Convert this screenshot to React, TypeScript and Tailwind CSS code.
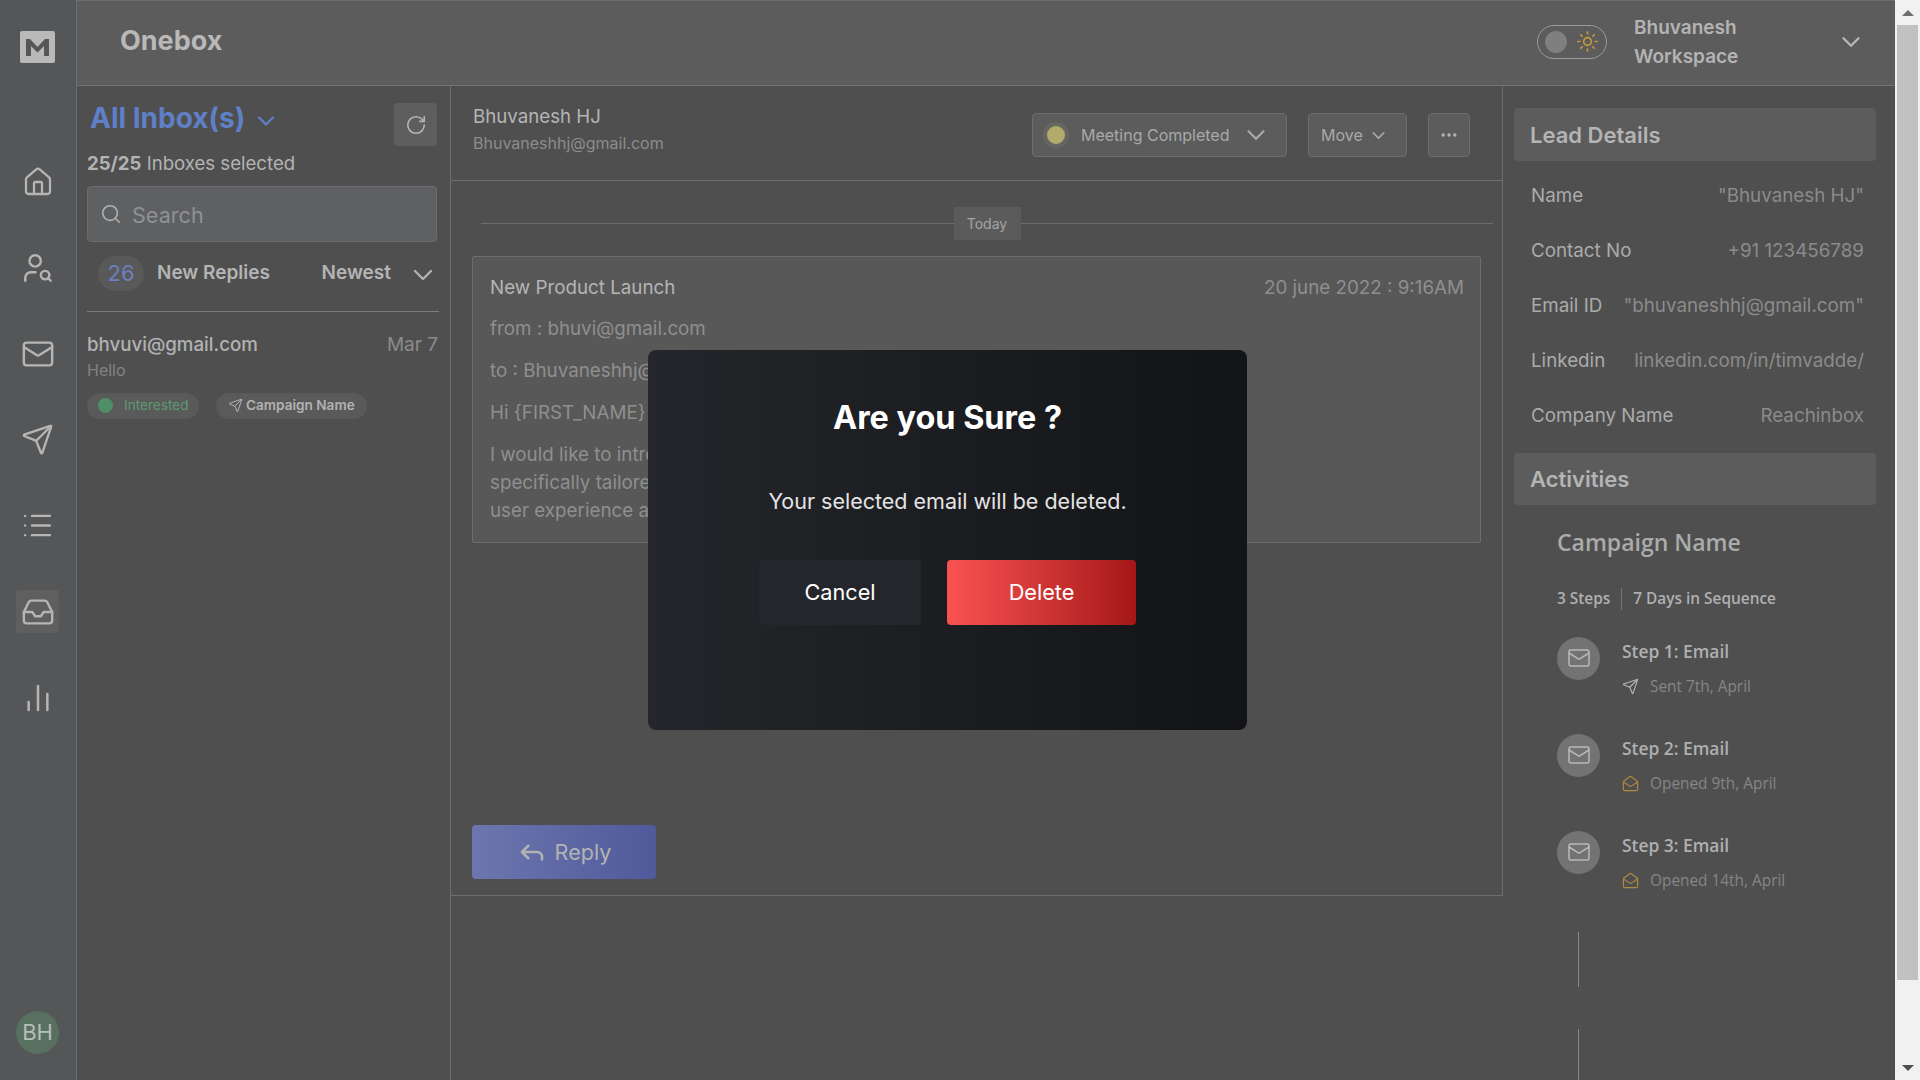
import { ChevronDown, House, Inbox, List, Mail, MailOpen, ChartNoAxesColumn, MoreHorizontal, Reply, RotateCw, Search, Send, Sun, UserSearch } from 'lucide-react';

const leadRows = [
  ['Name', '"Bhuvanesh HJ"'],
  ['Contact No', '+91 123456789'],
  ['Email ID', '"bhuvaneshhj@gmail.com"'],
  ['Linkedin', 'linkedin.com/in/timvadde/'],
  ['Company Name', 'Reachinbox'],
];

const steps = [
  { title: 'Step 1: Email', note: 'Sent 7th, April', sent: true },
  { title: 'Step 2: Email', note: 'Opened 9th, April', sent: false },
  { title: 'Step 3: Email', note: 'Opened 14th, April', sent: false },
];

function Logo() {
  return (
    <svg width="35" height="32" viewBox="0 0 35 32" className="mt-[31px] shrink-0">
      <rect width="35" height="32" rx="2" fill="#b9b9b9" />
      <path d="M6 25V8h4l7.5 8L25 8h4v17h-5V15l-6.5 6.5L11 15v10z" fill="#555657" />
    </svg>
  );
}

function Sidebar() {
  const cls = 'h-[43px] w-[43px] flex items-center justify-center rounded text-[#b5b5b5]';
  return (
    <aside className="w-[77px] shrink-0 flex flex-col items-center pr-px bg-[#555657] border-r border-[#6b6d73]">
      <Logo />
      <div className="mt-[97px] flex flex-col items-center gap-[43px]">
        <div className={cls}><House size={32} strokeWidth={1.7} /></div>
        <div className={cls}><UserSearch size={34} strokeWidth={1.7} /></div>
        <div className={cls}><Mail size={34} strokeWidth={1.7} /></div>
        <div className={cls}><Send size={33} strokeWidth={1.7} /></div>
        <div className={cls}><List size={33} strokeWidth={1.7} /></div>
        <div className={`${cls} bg-[#5f5f5f]`}><Inbox size={34} strokeWidth={1.7} /></div>
        <div className={cls}><ChartNoAxesColumn size={32} strokeWidth={1.9} /></div>
      </div>
      <div className="mt-auto mb-[26px] h-[43px] w-[43px] rounded-full bg-[#58705f] flex items-center justify-center text-[22px] text-[#b7bdb9]">
        BH
      </div>
    </aside>
  );
}

function TopBar() {
  return (
    <header className="h-[86px] shrink-0 flex items-center bg-[#5c5c5c] border-y border-t-[#6a6c75] border-b-[#71737a] pl-[43px] pb-[3px]">
      <h1 className="text-[27px] font-bold text-[#b9b9b9]">Onebox</h1>
      <div className="ml-auto flex items-center">
        <div className="h-[34px] w-[70px] rounded-full border border-[#9a9a9a] flex items-center pl-[7px] gap-[9px]">
          <span className="h-[22px] w-[22px] rounded-full bg-[#7f7f7f]" />
          <Sun size={23} className="text-[#c79a3d]" strokeWidth={1.7} />
        </div>
        <div className="ml-[27px] w-[177px] text-[19px] leading-[29px] font-semibold text-[#b4b4b4]">
          Bhuvanesh Workspace
        </div>
        <ChevronDown size={30} className="ml-[25px] mr-[29px] text-[#b9b9b9]" strokeWidth={1.8} />
      </div>
    </header>
  );
}

function InboxColumn() {
  return (
    <section className="w-[374px] shrink-0 border-r border-[#6b6d73] pl-[10px] pr-[13px]">
      <div className="flex items-start justify-between pt-[17px]">
        <div className="flex items-center -mt-[7px] pl-[1px] text-[#5f7fc6]">
          <span className="text-[28px] leading-[44px] font-bold ml-[2px]">All Inbox(s)</span>
          <ChevronDown size={28} className="ml-[7px] mt-[5px]" strokeWidth={2} />
        </div>
        <button className="h-[43px] w-[43px] rounded bg-[#5e5e5e] flex items-center justify-center text-[#b4b4b4]">
          <RotateCw size={22} strokeWidth={1.8} />
        </button>
      </div>
      <p className="mt-[3px] text-[18.6px] leading-[28px] text-[#b3b3b3]">
        <span className="font-bold">25/25</span> Inboxes selected
      </p>
      <div className="mt-[9px] h-[56px] rounded border border-[#6b6c6f] bg-[#5f6062] flex items-center pl-[12px] gap-[10px] text-[#8f9193]">
        <Search size={22} className="text-[#b0b0b0]" strokeWidth={1.8} />
        <span className="text-[21.6px] mt-[2px]">Search</span>
      </div>
      <div className="mt-[14px] flex items-center pl-[11px]">
        <span className="h-[35px] w-[46px] rounded-full bg-[#595959] flex items-center justify-center text-[22px] text-[#6d7fc0]">
          26
        </span>
        <span className="ml-[13px] text-[19px] font-semibold text-[#b4b4b4]">New Replies</span>
        <span className="ml-auto text-[19px] font-semibold text-[#b4b4b4]">Newest</span>
        <ChevronDown size={32} className="ml-[16px] -mr-[2px] mt-[3px] text-[#b4b4b4]" strokeWidth={1.7} />
      </div>
      <div className="mt-[20px] -mr-[2px] h-px bg-[#7d7d7d]" />
      <div className="mt-[19px] -mr-[1px] flex items-center justify-between">
        <span className="text-[18.7px] font-medium text-[#b2b2b2]">bhvuvi@gmail.com</span>
        <span className="text-[19px] text-[#8b8b8b]">Mar 7</span>
      </div>
      <p className="-mt-[2px] text-[16px] text-[#838383]">Hello</p>
      <div className="mt-[11px] flex items-center gap-[17px]">
        <span className="h-[26px] w-[112px] rounded-full bg-[#5a5a5a] flex items-center pl-[11px] gap-[11px] text-[13.6px] text-[#5b9b74]">
          <span className="h-[15px] w-[15px] rounded-full bg-[#4f8f68]" />
          Interested
        </span>
        <span className="h-[26px] w-[151px] rounded-full bg-[#5a5a5a] flex items-center pl-[12px] gap-[3px] text-[13.6px] font-semibold text-[#b2b2b2]">
          <Send size={15} strokeWidth={1.6} />
          Campaign Name
        </span>
      </div>
    </section>
  );
}

function ThreadColumn() {
  return (
    <section className="w-[1052px] shrink-0 h-[810px] flex flex-col border-r border-b border-[#6b6d70]">
      <div className="h-[95px] shrink-0 border-b border-[#6b6d73] flex items-start pl-[22px] pr-[32px]">
        <div className="pt-[17px]">
          <p className="text-[18.7px] leading-[28px] text-[#b5b5b5]">Bhuvanesh HJ</p>
          <p className="text-[16px] leading-[24px] text-[#8c8c8c]">Bhuvaneshhj@gmail.com</p>
        </div>
        <div className="ml-auto mt-[27px] flex items-center">
          <div className="h-[44px] w-[255px] rounded border border-[#6c6d72] bg-[#5c5c5c] flex items-center pl-[10px] text-[16px] text-[#a9a9a9]">
            <span className="h-[26px] w-[26px] rounded-full bg-[#666660] flex items-center justify-center">
              <span className="h-[18px] w-[18px] rounded-full bg-[#b3aa6d]" />
            </span>
            <span className="ml-[12px]">Meeting Completed</span>
            <ChevronDown size={30} className="ml-[12px]" strokeWidth={1.8} />
          </div>
          <div className="ml-[21px] h-[44px] w-[99px] rounded border border-[#6c6d72] bg-[#5c5c5c] flex items-center pl-[12px] gap-[5px] text-[16px] text-[#a9a9a9]">
            Move
            <ChevronDown size={21} strokeWidth={1.8} />
          </div>
          <div className="ml-[21px] h-[44px] w-[42px] rounded border border-[#6c6d72] bg-[#5c5c5c] flex items-center justify-center text-[#b5b5b5]">
            <MoreHorizontal size={20} strokeWidth={2} />
          </div>
        </div>
      </div>
      <div className="relative flex-1 pl-[21px] pr-[21px]">
        <div className="mt-[26px] ml-[9px] -mr-[12px] flex items-center">
          <div className="flex-1 h-px bg-[#6c6c6c]" />
          <span className="h-[33px] w-[67px] bg-[#5a5b5a] flex items-center justify-center text-[14px] text-[#a5a5a5]">
            Today
          </span>
          <div className="flex-1 h-px bg-[#6c6c6c]" />
        </div>
        <article className="mt-[16px] h-[287px] rounded-[2px] border border-[#6c6d72] bg-[#585858] pl-[17px] pr-[16px] pt-[17px] text-[18.8px] leading-[28px] text-[#8f8f8f]">
          <div className="flex justify-between">
            <span className="text-[#b5b5b5]">New Product Launch</span>
            <span>20 june 2022 : 9:16AM</span>
          </div>
          <p className="mt-[13px]">from : bhuvi@gmail.com</p>
          <p className="mt-[14px]">to : Bhuvaneshhj@gmail.com</p>
          <p className="mt-[14px]">Hi {'{FIRST_NAME}'}</p>
          <p className="mt-[14px]">I would like to introduce</p>
          <p>specifically tailored</p>
          <p>user experience and</p>
        </article>
        <button className="absolute left-[21px] top-[644px] h-[54px] w-[184px] rounded bg-linear-to-r from-[#6d76ae] to-[#4f5a9b] flex items-center justify-center gap-[8px] text-[21.6px] text-[#b3b3b3]">
          <Reply size={30} strokeWidth={2} />
          Reply
        </button>
      </div>
    </section>
  );
}

function SideHeading({ children, className }: { children: string; className: string }) {
  return (
    <div className={`ml-[11px] mr-[19px] rounded bg-[#5c5c5c] flex items-center pl-[16px] text-[22px] font-semibold text-[#b4b4b4] ${className}`}>
      {children}
    </div>
  );
}

function LeadPanel() {
  return (
    <section className="flex-1 min-w-0 overflow-hidden pt-[22px]">
      <SideHeading className="h-[53px] pt-px">Lead Details</SideHeading>
      <div className="mt-[7px] mb-[9.5px] pl-[28px] pr-[31px]">
        {leadRows.map(([label, value]) => (
          <div key={label} className="h-[55.2px] flex items-center justify-between text-[18.8px] whitespace-nowrap">
            <span className="text-[#ababab]">{label}</span>
            <span className="text-[#8b8b8b]">{value}</span>
          </div>
        ))}
      </div>
      <SideHeading className="h-[52px]">Activities</SideHeading>
      <div className="pl-[54px] font-['Open_Sans',sans-serif]">
        <h3 className="mt-[19px] text-[23px] leading-[36px] font-semibold text-[#ababab]">Campaign Name</h3>
        <div className="mt-[27px] flex items-center text-[15.4px] font-semibold text-[#b0b0b0]">
          <span>3 Steps</span>
          <span className="mx-[11px] h-[22px] w-px bg-[#747474]" />
          <span>7 Days in Sequence</span>
        </div>
        <div className="mt-[26px] flex flex-col gap-[35px]">
          {steps.map((step) => (
            <div key={step.title} className="flex items-start">
              <span className="h-[43px] w-[43px] shrink-0 rounded-full bg-[#737373] flex items-center justify-center text-[#b9b9b9]">
                <Mail size={24} strokeWidth={1.5} />
              </span>
              <div className="ml-[22px] pt-px">
                <p className="h-[26px] text-[17.4px] leading-[26px] font-semibold text-[#b0b0b0]">{step.title}</p>
                <div className="mt-[11px] h-[24px] flex items-center gap-[11px] text-[15.4px] text-[#868686]">
                  {step.sent ? (
                    <Send size={17} strokeWidth={1.6} className="text-[#b5b5b5]" />
                  ) : (
                    <MailOpen size={17} strokeWidth={1.6} className="text-[#b08a42]" />
                  )}
                  {step.note}
                </div>
              </div>
            </div>
          ))}
        </div>
        <div className="mt-[39px] ml-[21px] h-[55px] w-px bg-[#8a8a8a]" />
        <div className="mt-[42px] ml-[21px] h-[55px] w-px bg-[#8a8a8a]" />
      </div>
    </section>
  );
}

function Scrollbar() {
  return (
    <div className="w-[25px] shrink-0 flex flex-col pl-[2px] pr-[2px] bg-[#f1f1f1]">
      <div className="h-[25px] flex items-center justify-center">
        <span className="border-x-[6px] border-b-[6px] border-x-transparent border-b-[#6f6f6f]" />
      </div>
      <div className="h-[955px] bg-[#c1c1c1]" />
      <div className="mt-auto h-[25px] flex items-center justify-center">
        <span className="border-x-[6px] border-t-[6px] border-x-transparent border-t-[#4f4f4f]" />
      </div>
    </div>
  );
}

function DeleteModal() {
  return (
    <div className="absolute left-[648px] top-[350px] h-[380px] w-[599px] rounded-lg bg-linear-to-r from-[#24262b] to-[#131416] flex flex-col items-center">
      <h2 className="mt-[46px] text-[32.4px] leading-[44px] font-bold text-white">Are you Sure ?</h2>
      <p className="mt-[44px] text-[21.5px] leading-[34px] text-[#e4e4e4]">Your selected email will be deleted.</p>
      <div className="mt-[42px] flex gap-[26px]">
        <button className="h-[65px] w-[162px] rounded bg-[#25262b] text-[21.7px] text-white">Cancel</button>
        <button className="h-[65px] w-[189px] rounded bg-linear-to-r from-[#fa5252] to-[#a51717] text-[21.7px] text-white">
          Delete
        </button>
      </div>
    </div>
  );
}

export default function App() {
  return (
    <div className="relative h-screen flex overflow-hidden bg-[#4f4f4f] font-['Inter',sans-serif]">
      <Sidebar />
      <div className="flex-1 min-w-0 flex flex-col">
        <TopBar />
        <div className="flex flex-1 min-h-0">
          <InboxColumn />
          <ThreadColumn />
          <LeadPanel />
        </div>
      </div>
      <Scrollbar />
      <DeleteModal />
    </div>
  );
}
